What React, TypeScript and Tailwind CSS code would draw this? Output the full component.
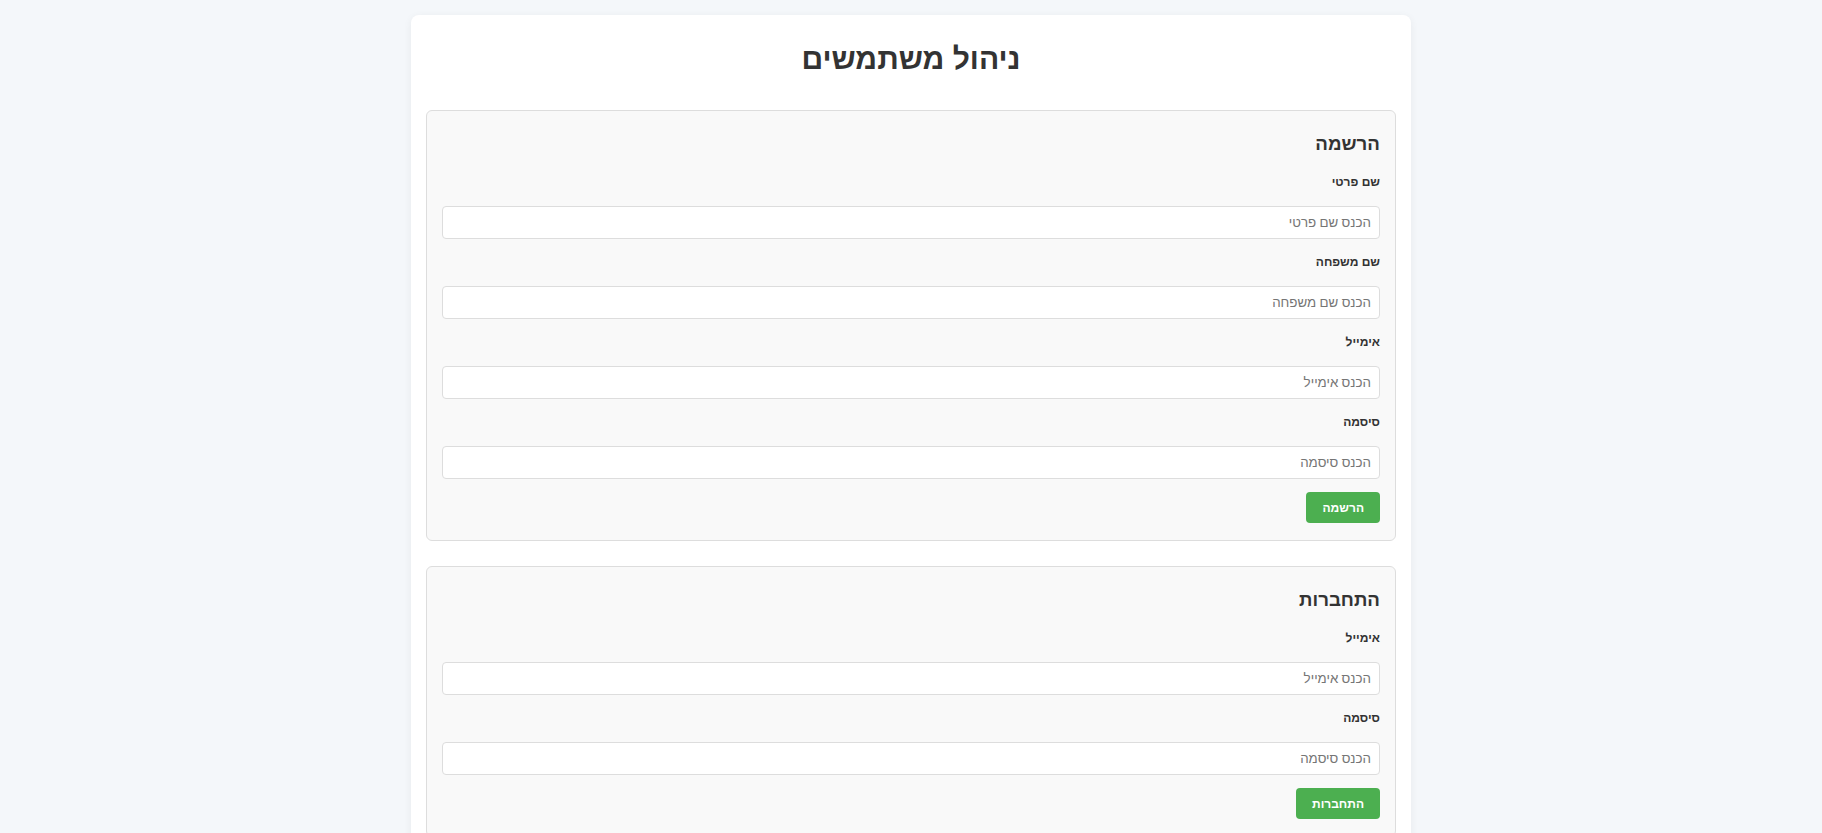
type Field = { label: string; placeholder: string; type: string };

const registerFields: Field[] = [
  { label: "שם פרטי", placeholder: "הכנס שם פרטי", type: "text" },
  { label: "שם משפחה", placeholder: "הכנס שם משפחה", type: "text" },
  { label: "אימייל", placeholder: "הכנס אימייל", type: "email" },
  { label: "סיסמה", placeholder: "הכנס סיסמה", type: "password" },
];

const loginFields: Field[] = [
  { label: "אימייל", placeholder: "הכנס אימייל", type: "email" },
  { label: "סיסמה", placeholder: "הכנס סיסמה", type: "password" },
];

function FormSection({ title, fields, button }: { title: string; fields: Field[]; button: string }) {
  return (
    <section className="mb-[25px] rounded-[6px] border border-[#dddddd] bg-[#f9f9f9] px-[15px] pt-[15px] pb-[17px]">
      <h3 className="mt-[7px] mb-[21px] text-[18.7px] font-bold leading-[21px] text-[#333333]">{title}</h3>
      {fields.map((f, i) => (
        <div key={i} className={i < fields.length - 1 ? "mb-[16px]" : ""}>
          <label className="mb-[17px] block text-[12px] font-bold leading-[14px] text-[#333333]">{f.label}</label>
          <input
            type={f.type}
            placeholder={f.placeholder}
            className="block h-[33px] w-full rounded-[4px] border border-[#dddddd] bg-white px-[8px] font-['Roboto',sans-serif] text-[13.33px] text-[#333333] outline-none placeholder:text-[#757575]"
          />
        </div>
      ))}
      <button className="mt-[13px] h-[31px] rounded-[4px] bg-[#4caf50] px-[16px] text-[12px] font-bold text-white">
        {button}
      </button>
    </section>
  );
}

export default function App() {
  return (
    <div className="min-h-screen bg-[#f4f7fa] pt-[15px] font-['Liberation_Sans',Arial,sans-serif]">
      <div dir="rtl" className="mx-auto w-[1000px] rounded-[8px] bg-white p-[15px] shadow-[0_2px_8px_rgba(0,0,0,0.06)]">
        <h1 className="mt-[12px] mb-[34px] text-center text-[30px] font-bold leading-[34px] text-[#333333]">ניהול משתמשים</h1>
        <FormSection title="הרשמה" fields={registerFields} button="הרשמה" />
        <FormSection title="התחברות" fields={loginFields} button="התחברות" />
      </div>
    </div>
  );
}
